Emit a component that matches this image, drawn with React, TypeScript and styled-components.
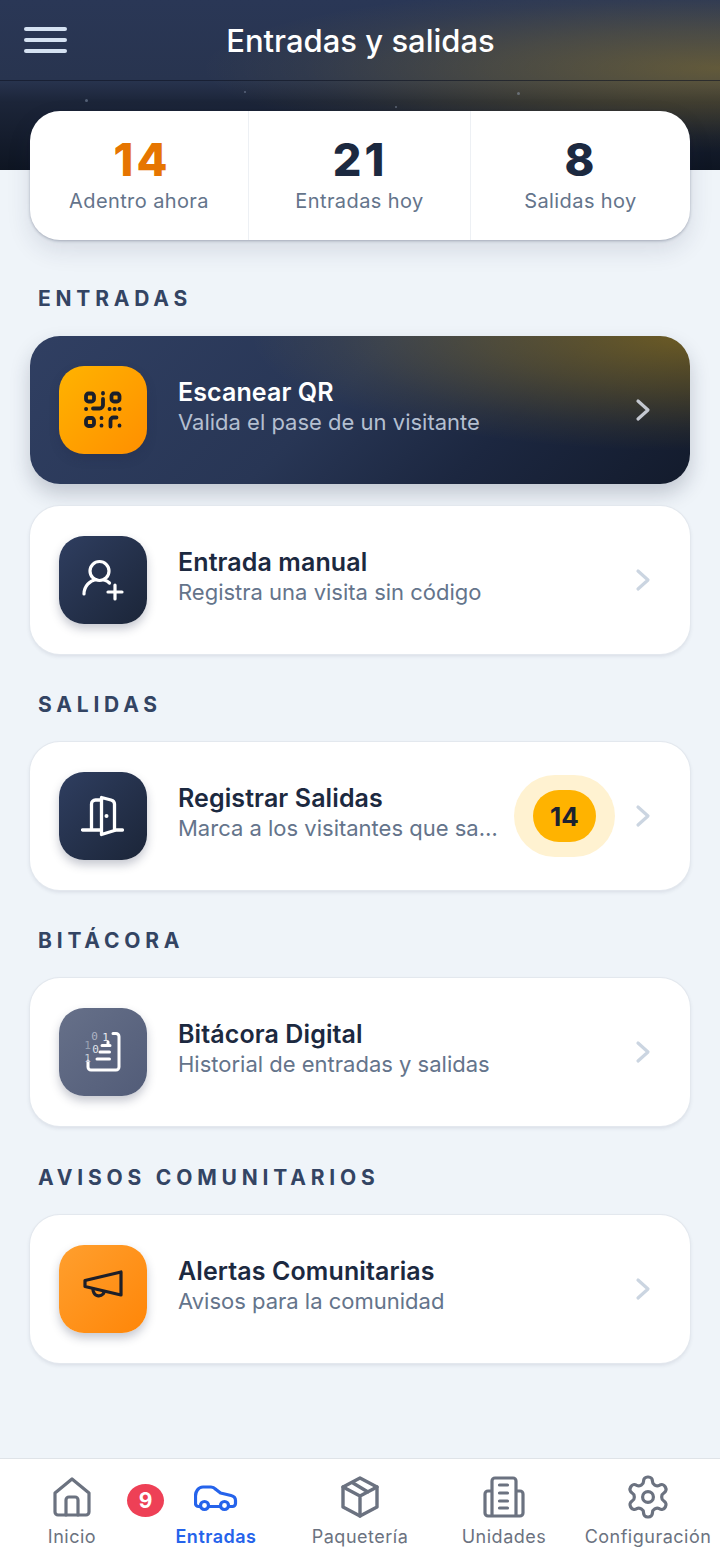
import styled, { createGlobalStyle } from "styled-components";

const GlobalStyle = createGlobalStyle`
  html, body {
    margin: 0;
    padding: 0;
    background: #eff4f9;
  }
  * {
    box-sizing: border-box;
  }
`;

const stats = [
  { value: "14", label: "Adentro ahora", accent: true },
  { value: "21", label: "Entradas hoy", accent: false },
  { value: "8", label: "Salidas hoy", accent: false },
];

const stars = [
  { x: 85, y: 99, size: 3 },
  { x: 244, y: 91, size: 2 },
  { x: 395, y: 106, size: 2 },
  { x: 517, y: 92, size: 3 },
];

function QrIcon() {
  return (
    <svg width="40" height="40" viewBox="0 0 40 40" fill="none" stroke="#1b1f2a" strokeWidth="3.8" strokeLinecap="round" strokeLinejoin="round">
      <rect x="3" y="3.500" width="8" height="8" rx="2.500" />
      <rect x="28.500" y="3.500" width="8" height="8" rx="2.500" />
      <rect x="3" y="28" width="8" height="8" rx="2.500" />
      <path d="M20 3v.5M20 9v6a3.500 3.500 0 0 1-3.500 3.500H10M3 19h.2M26.500 19h.2M31.500 19h.2M36.500 19h.2M18.500 28v.2M18.500 35.500v.2M27.500 36.500V30.500a3 3 0 0 1 3-3h3M36.500 35.500v.2" />
    </svg>
  );
}

function AddUserIcon() {
  return (
    <svg width="44" height="44" viewBox="0 0 44 44" fill="none" stroke="#fff" strokeWidth="3.2" strokeLinecap="round">
      <circle cx="18.5" cy="13" r="9.5" />
      <path d="M3 36c0-8 6-13.5 12-14.5M23 22c2 .5 4 1.500 5.500 3M34 27v14M27 34h14" />
    </svg>
  );
}

function DoorIcon() {
  return (
    <svg width="44" height="44" viewBox="0 0 44 44" fill="none" stroke="#fff" strokeWidth="3.300" strokeLinecap="round" strokeLinejoin="round">
      <path d="M1.500 36h19M33.500 36h8M10.500 36V10a4 4 0 0 1 4-4h6" />
      <path d="M20.500 3.500L30 6q3.500 1 3.500 4v26.500l-13 4z" />
      <circle cx="25.500" cy="22" r="2" fill="#fff" stroke="none" />
    </svg>
  );
}

function LogIcon() {
  return (
    <svg width="44" height="44" viewBox="0 0 44 44" fill="none" stroke="#fff" strokeWidth="3" strokeLinecap="round" strokeLinejoin="round">
      <path d="M32 3.500h3a3 3 0 0 1 3 3V37a3 3 0 0 1-3 3H10a3 3 0 0 1-3-3v-6" />
      <path d="M19 22h9.500M16 29h12.500M21 15.500h8M27 15.500V12" />
      <BinaryDigit x="13.500" y="10" fill="#aeb5c4">0</BinaryDigit>
      <BinaryDigit x="24.500" y="11" fill="#e8eaf0">1</BinaryDigit>
      <BinaryDigit x="6.500" y="18.500" fill="#99a1b3">1</BinaryDigit>
      <BinaryDigit x="14.500" y="23" fill="#dfe3ea">0</BinaryDigit>
      <BinaryDigit x="6.500" y="32" fill="#c6ccd8">1</BinaryDigit>
    </svg>
  );
}

function MegaphoneIcon() {
  return (
    <svg width="44" height="44" viewBox="0 0 44 44" fill="none" stroke="#1d1f29" strokeWidth="3.200" strokeLinecap="round" strokeLinejoin="round">
      <path d="M40 5v23L4 19.500v-6z" />
      <path d="M12 22a6 6 0 0 0 1 4 5.500 5.500 0 0 0 9 1 5 5 0 0 0 1-2" />
    </svg>
  );
}

function Chevron({ light }: { light?: boolean }) {
  return (
    <ChevronSvg width="16" height="24" viewBox="0 0 16 24" fill="none" stroke={light ? "#c4c8d0" : "#cbd5e1"} strokeWidth="3.200" strokeLinecap="round" strokeLinejoin="round">
      <path d="M3 3l10 9-10 9" />
    </ChevronSvg>
  );
}

function HomeIcon() {
  return (
    <svg width="38" height="40" viewBox="0 0 38 40" fill="none" stroke="#6b7280" strokeWidth="3.200" strokeLinecap="round" strokeLinejoin="round">
      <path d="M2 16L19 2l17 14v19a3 3 0 0 1-3 3H5a3 3 0 0 1-3-3z" />
      <path d="M13 38V23a3 3 0 0 1 3-3h6a3 3 0 0 1 3 3v15" />
    </svg>
  );
}

function CarIcon() {
  return (
    <svg width="44" height="32" viewBox="0 -4 44 32" fill="none" stroke="#2563eb" strokeWidth="3.200" strokeLinecap="round" strokeLinejoin="round">
      <path d="M6 21.500H4.500a3 3 0 0 1-3-3V11C1.500 7 4 2 9 2h8c2 0 3.500 1 5 2.500L26.500 8 37 10.500c3 .7 4.500 2.500 4.500 5v3a3 3 0 0 1-3 3H35M15 21.500h11" />
      <circle cx="10.500" cy="20.500" r="4" />
      <circle cx="30.500" cy="20.500" r="4" />
    </svg>
  );
}

function BoxIcon() {
  return (
    <svg width="40" height="42" viewBox="0 0 40 42" fill="none" stroke="#6b7280" strokeWidth="3.400" strokeLinecap="round" strokeLinejoin="round">
      <path d="M20 2l17 9v20l-17 9-17-9V11z" />
      <path d="M3 11l17 9 17-9M20 20v20M13 7l15 9" />
    </svg>
  );
}

function BuildingIcon() {
  return (
    <svg width="42" height="42" viewBox="0 0 42 42" fill="none" stroke="#6b7280" strokeWidth="3.200" strokeLinecap="round" strokeLinejoin="round">
      <path d="M9 40V5a3 3 0 0 1 3-3h18a3 3 0 0 1 3 3v35M9 15H5a3 3 0 0 0-3 3v19a3 3 0 0 0 3 3h32a3 3 0 0 0 3-3V18a3 3 0 0 0-3-3h-4" />
      <path d="M16.500 9h8M16.500 17h8M16.500 25h8M16.500 32h8" />
    </svg>
  );
}

function GearIcon() {
  return (
    <svg width="48" height="48" viewBox="0 0 24 24" fill="none" stroke="#6b7280" strokeWidth="1.600" strokeLinecap="round" strokeLinejoin="round">
      <path d="M12.220 2h-.44a2 2 0 0 0-2 2v.180a2 2 0 0 1-1 1.730l-.43.250a2 2 0 0 1-2 0l-.150-.080a2 2 0 0 0-2.730.730l-.220.380a2 2 0 0 0 .730 2.730l.150.100a2 2 0 0 1 1 1.720v.510a2 2 0 0 1-1 1.740l-.150.090a2 2 0 0 0-.730 2.730l.220.380a2 2 0 0 0 2.730.730l.150-.080a2 2 0 0 1 2 0l.430.250a2 2 0 0 1 1 1.730V20a2 2 0 0 0 2 2h.44a2 2 0 0 0 2-2v-.180a2 2 0 0 1 1-1.730l.430-.250a2 2 0 0 1 2 0l.150.080a2 2 0 0 0 2.730-.730l.220-.390a2 2 0 0 0-.730-2.730l-.150-.080a2 2 0 0 1-1-1.740v-.500a2 2 0 0 1 1-1.740l.150-.090a2 2 0 0 0 .730-2.730l-.220-.380a2 2 0 0 0-2.730-.730l-.150.080a2 2 0 0 1-2 0l-.430-.250a2 2 0 0 1-1-1.730V4a2 2 0 0 0-2-2z" />
      <circle cx="12" cy="12" r="2.700" />
    </svg>
  );
}

const navItems = [
  { label: "Inicio", icon: <HomeIcon /> },
  { label: "Entradas", icon: <CarIcon />, active: true, badge: "9" },
  { label: "Paquetería", icon: <BoxIcon /> },
  { label: "Unidades", icon: <BuildingIcon /> },
  { label: "Configuración", icon: <GearIcon /> },
];

export default function App() {
  return (
    <>
      <GlobalStyle />
      <Screen>
        <Hero>
          {stars.map((s) => (
            <Star key={s.x} $x={s.x} $y={s.y} $size={s.size} />
          ))}
          <TopBar>
            <Burger>
              <span />
              <span />
              <span />
            </Burger>
            <Title>Entradas y salidas</Title>
          </TopBar>
        </Hero>

        <Main>
          <StatCard>
            {stats.map((s) => (
              <Stat key={s.label}>
                <StatValue $accent={s.accent}>{s.value}</StatValue>
                <StatLabel>{s.label}</StatLabel>
              </Stat>
            ))}
          </StatCard>

          <SectionLabel>ENTRADAS</SectionLabel>
          <HeroAction>
            <IconBox $tone="amber">
              <QrIcon />
            </IconBox>
            <ActionText>
              <ActionTitle $light>Escanear QR</ActionTitle>
              <ActionSub $light>Valida el pase de un visitante</ActionSub>
            </ActionText>
            <Chevron light />
          </HeroAction>
          <ActionCard $spaced>
            <IconBox $tone="navy">
              <AddUserIcon />
            </IconBox>
            <ActionText>
              <ActionTitle>Entrada manual</ActionTitle>
              <ActionSub>Registra una visita sin código</ActionSub>
            </ActionText>
            <Chevron />
          </ActionCard>

          <SectionLabel>SALIDAS</SectionLabel>
          <ActionCard>
            <IconBox $tone="navy">
              <DoorIcon />
            </IconBox>
            <ActionText>
              <ActionTitle>Registrar Salidas</ActionTitle>
              <ActionSub>Marca a los visitantes que salen</ActionSub>
            </ActionText>
            <CountHalo>
              <CountPill>14</CountPill>
            </CountHalo>
            <Chevron />
          </ActionCard>

          <SectionLabel>BITÁCORA</SectionLabel>
          <ActionCard>
            <IconBox $tone="slate">
              <LogIcon />
            </IconBox>
            <ActionText>
              <ActionTitle>Bitácora Digital</ActionTitle>
              <ActionSub>Historial de entradas y salidas</ActionSub>
            </ActionText>
            <Chevron />
          </ActionCard>

          <SectionLabel>AVISOS COMUNITARIOS</SectionLabel>
          <ActionCard>
            <IconBox $tone="orange">
              <MegaphoneIcon />
            </IconBox>
            <ActionText>
              <ActionTitle>Alertas Comunitarias</ActionTitle>
              <ActionSub>Avisos para la comunidad</ActionSub>
            </ActionText>
            <Chevron />
          </ActionCard>
        </Main>

        <TabBar>
          {navItems.map((item) => (
            <Tab key={item.label}>
              <TabIcon>
                {item.icon}
                {item.badge && <Badge>{item.badge}</Badge>}
              </TabIcon>
              <TabLabel $active={item.active}>{item.label}</TabLabel>
            </Tab>
          ))}
        </TabBar>
      </Screen>
    </>
  );
}

const tones = {
  amber: "linear-gradient(135deg, #ffb300, #ff8f00)",
  navy: "linear-gradient(135deg, #2f3e60, #1b2538)",
  slate: "linear-gradient(135deg, #667089, #525c78)",
  orange: "linear-gradient(135deg, #ff9f2e, #ff8608)",
};

const BinaryDigit = styled.text`
  font-family: "DejaVu Sans Mono", monospace;
  font-size: 11px;
  stroke: none;
  text-anchor: middle;
`;

const Screen = styled.div`
  width: 720px;
  height: 1558px;
  display: flex;
  flex-direction: column;
  background: #eff4f9;
  font-family: Inter, "Liberation Sans", sans-serif;
  overflow: hidden;
`;

const Hero = styled.header`
  position: relative;
  height: 170px;
  flex-shrink: 0;
  background:
    radial-gradient(
      ellipse 520px 85px at 100% 68px,
      rgba(255, 190, 0, 0.27) 0%,
      rgba(255, 190, 0, 0.15) 45%,
      rgba(255, 190, 0, 0.04) 80%,
      transparent 100%
    ),
    linear-gradient(180deg, #2a3756 0%, #28344f 47%, #1c2539 60%, #0e1522 100%);
`;

const Star = styled.i<{ $x: number; $y: number; $size: number }>`
  position: absolute;
  left: ${(p) => p.$x}px;
  top: ${(p) => p.$y}px;
  width: ${(p) => p.$size}px;
  height: ${(p) => p.$size}px;
  border-radius: 50%;
  background: rgba(170, 185, 210, 0.4);
`;

const TopBar = styled.div`
  height: 81px;
  display: flex;
  align-items: center;
  padding: 0 24px;
  border-bottom: 1px solid rgba(15, 20, 35, 0.6);
  position: relative;
`;

const Burger = styled.div`
  width: 43px;
  display: flex;
  flex-direction: column;
  gap: 7px;

  span {
    display: block;
    height: 4px;
    border-radius: 2px;
    background: #d5e2f2;
  }
`;

const Title = styled.h1`
  flex: 1;
  margin: 0 0 0 -5px;
  padding-right: 37px;
  text-align: center;
  font-size: 31px;
  font-weight: 500;
  color: #fff;
`;

const Main = styled.main`
  flex: 1;
  padding: 0 30px;
  margin-top: -59px;
  position: relative;
`;

const StatCard = styled.section`
  height: 129px;
  display: grid;
  grid-template-columns: 218px 222px 220px;
  background: #fff;
  border-radius: 30px;
  box-shadow: 0 10px 24px rgba(30, 41, 70, 0.12), 0 1px 3px rgba(30, 41, 70, 0.3);
`;

const Stat = styled.div`
  display: flex;
  flex-direction: column;
  align-items: center;
  padding-top: 24px;
  & + & {
    border-left: 1px solid #edf0f4;
  }
`;

const StatValue = styled.div<{ $accent?: boolean }>`
  font-size: 45px;
  line-height: 50px;
  font-weight: 800;
  letter-spacing: 3px;
  margin-left: ${(p) => (p.$accent ? "6px" : "1px")};
  color: ${(p) => (p.$accent ? "#e67500" : "#1c2940")};
`;

const StatLabel = styled.div`
  margin-top: 2px;
  font-size: 20px;
  line-height: 28px;
  color: #64748b;
  letter-spacing: 0.4px;
`;

const SectionLabel = styled.h2`
  margin: 37.2px 0 24px 8px;
  height: 27px;
  font-size: 21px;
  line-height: 27px;
  font-weight: 700;
  letter-spacing: 4.800px;
  color: #334463;

  ${StatCard} + & {
    margin-top: 45px;
  }
`;

const ActionCard = styled.div<{ $spaced?: boolean }>`
  height: 148px;
  margin-top: ${(p) => (p.$spaced ? "22px" : "0")};
  display: flex;
  align-items: center;
  gap: 30px;
  padding: 0 39px 0 29px;
  background: #fff;
  border-radius: 30px;
  box-shadow: 0 0 0 1px #e3e8ee, 0 2px 4px rgba(30, 41, 70, 0.12);
`;

const HeroAction = styled(ActionCard)`
  background:
    radial-gradient(
      ellipse 440px 115px at 100% 0,
      rgba(255, 190, 0, 0.36) 0%,
      rgba(255, 190, 0, 0.2) 45%,
      rgba(255, 190, 0, 0.06) 80%,
      transparent 100%
    ),
    linear-gradient(135deg, #303f62 0%, #283655 45%, #1c2740 70%, #131b2c 100%);
  box-shadow: 0 10px 20px rgba(30, 41, 70, 0.22);
`;

const IconBox = styled.div<{ $tone: keyof typeof tones }>`
  width: 88px;
  height: 88px;
  margin-right: 1px;
  flex-shrink: 0;
  display: flex;
  align-items: center;
  justify-content: center;
  border-radius: 25px;
  background: ${(p) => tones[p.$tone]};
  box-shadow: 0 5px 10px rgba(30, 41, 70, 0.25);
`;

const ActionText = styled.div`
  flex: 1;
  min-width: 0;
  padding-bottom: 6px;
`;

const ActionTitle = styled.div<{ $light?: boolean }>`
  font-size: 25px;
  line-height: 30px;
  font-weight: 600;
  letter-spacing: 0.1px;
  color: ${(p) => (p.$light ? "#fff" : "#1c2940")};
`;

const ActionSub = styled.div<{ $light?: boolean }>`
  font-size: 22px;
  line-height: 30px;
  white-space: nowrap;
  overflow: hidden;
  text-overflow: ellipsis;
  color: ${(p) => (p.$light ? "#b4bfd0" : "#64748b")};
`;

const ChevronSvg = styled.svg`
  flex-shrink: 0;
`;

const CountHalo = styled.div`
  margin: 0 -10px 0 -16px;
  width: 101px;
  height: 82px;
  flex-shrink: 0;
  display: flex;
  align-items: center;
  justify-content: center;
  border-radius: 41px;
  background: #fff2d1;
`;

const CountPill = styled.div`
  width: 63px;
  height: 52px;
  display: flex;
  align-items: center;
  justify-content: center;
  border-radius: 26px;
  background: #ffb300;
  font-size: 26px;
  font-weight: 700;
  color: #1b2230;
`;

const TabBar = styled.nav`
  height: 100px;
  flex-shrink: 0;
  display: grid;
  grid-template-columns: repeat(5, 144px);
  background: #fff;
  border-top: 1px solid #dfe3e8;
`;

const Tab = styled.div`
  display: flex;
  flex-direction: column;
  align-items: center;
`;

const TabIcon = styled.div`
  position: relative;
  height: 66px;
  padding-top: 10px;
  display: flex;
  align-items: center;
  justify-content: center;
`;

const Badge = styled.span`
  position: absolute;
  left: -67px;
  top: 25px;
  width: 37px;
  height: 33px;
  display: flex;
  align-items: center;
  justify-content: center;
  border-radius: 50%;
  background: #ee4056;
  color: #fff;
  font-size: 21px;
  font-weight: 700;
`;

const TabLabel = styled.span<{ $active?: boolean }>`
  font-size: 18px;
  line-height: 24px;
  font-weight: ${(p) => (p.$active ? 600 : 400)};
  letter-spacing: 0.500px;
  white-space: nowrap;
  color: ${(p) => (p.$active ? "#2563eb" : "#6b7280")};
`;
